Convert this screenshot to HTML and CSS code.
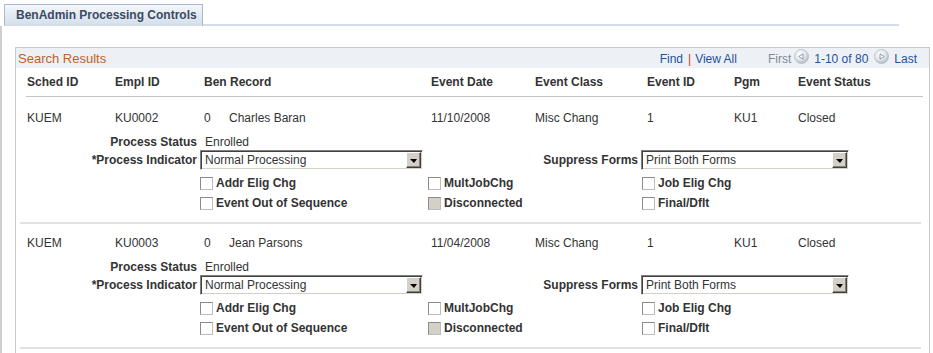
FILE: index.html
```html
<!DOCTYPE html>
<html lang="en">
<head>
<meta charset="UTF-8" />
<title>BenAdmin Processing Controls</title>
<link rel="stylesheet" href="styles.css">
</head>
<body>

<div class="tabs">
  <div class="tab">BenAdmin Processing Controls</div>
  <div class="tab-line"></div>
</div>

<div class="panel">
  <div class="grid">

    <!-- grid title bar -->
    <div class="grid-bar">
      <span class="grid-title">Search Results</span>
      <div class="grid-nav">
        <span class="lnk">Find</span><span class="sep">|</span><span class="lnk">View All</span>
        <span class="first">First</span>
        <svg class="nav-btn prev" viewBox="0 0 15 15">
          <defs>
            <radialGradient id="ball" cx="40%" cy="35%" r="70%">
              <stop offset="0" stop-color="#ffffff"/>
              <stop offset="0.55" stop-color="#e2e6eb"/>
              <stop offset="1" stop-color="#aab3be"/>
            </radialGradient>
          </defs>
          <circle cx="7.5" cy="7.5" r="7" fill="url(#ball)" stroke="#b3bcc6" stroke-width="0.8"/>
          <polygon points="4.8,7.5 9,4.8 9,10.2" fill="#fff" stroke="#76828f" stroke-width="0.8"/>
        </svg>
        <span class="lnk">1-10 of 80</span>
        <svg class="nav-btn next" viewBox="0 0 15 15">
          <circle cx="7.5" cy="7.5" r="7" fill="url(#ball)" stroke="#b3bcc6" stroke-width="0.8"/>
          <polygon points="10.2,7.5 6,4.8 6,10.2" fill="#fff" stroke="#76828f" stroke-width="0.8"/>
        </svg>
        <span class="lnk">Last</span>
      </div>
    </div>

    <!-- column headings -->
    <div class="cols head">
      <span>Sched ID</span>
      <span>Empl ID</span>
      <span>Ben Record</span>
      <span>Event Date</span>
      <span>Event Class</span>
      <span>Event ID</span>
      <span>Pgm</span>
      <span>Event Status</span>
    </div>

    <!-- record 1 -->
    <div class="rec">
      <div class="cols">
        <span>KUEM</span>
        <span>KU0002</span>
        <span class="ben"><span class="ben-no">0</span><span>Charles Baran</span></span>
        <span>11/10/2008</span>
        <span>Misc Chang</span>
        <span>1</span>
        <span>KU1</span>
        <span>Closed</span>
      </div>
      <div class="status">
        <span class="lbl">Process Status</span>
        <span class="val">Enrolled</span>
      </div>
      <div class="ind">
        <span class="lbl">*Process Indicator</span>
        <div class="dd dd-w1"><span>Normal Processing</span><span class="dd-btn"></span></div>
        <span class="lbl lbl-wide">Suppress Forms</span>
        <div class="dd dd-w2"><span>Print Both Forms</span><span class="dd-btn"></span></div>
      </div>
      <div class="cbs cbs-first">
        <span class="cb"><span class="box"></span>Addr Elig Chg</span>
        <span class="cb"><span class="box"></span>MultJobChg</span>
        <span class="cb"><span class="box"></span>Job Elig Chg</span>
      </div>
      <div class="cbs">
        <span class="cb"><span class="box"></span>Event Out of Sequence</span>
        <span class="cb"><span class="box off"></span>Disconnected</span>
        <span class="cb"><span class="box"></span>Final/Dflt</span>
      </div>
    </div>

    <!-- record 2 -->
    <div class="rec">
      <div class="cols">
        <span>KUEM</span>
        <span>KU0003</span>
        <span class="ben"><span class="ben-no">0</span><span>Jean Parsons</span></span>
        <span>11/04/2008</span>
        <span>Misc Chang</span>
        <span>1</span>
        <span>KU1</span>
        <span>Closed</span>
      </div>
      <div class="status">
        <span class="lbl">Process Status</span>
        <span class="val">Enrolled</span>
      </div>
      <div class="ind">
        <span class="lbl">*Process Indicator</span>
        <div class="dd dd-w1"><span>Normal Processing</span><span class="dd-btn"></span></div>
        <span class="lbl lbl-wide">Suppress Forms</span>
        <div class="dd dd-w2"><span>Print Both Forms</span><span class="dd-btn"></span></div>
      </div>
      <div class="cbs cbs-first">
        <span class="cb"><span class="box"></span>Addr Elig Chg</span>
        <span class="cb"><span class="box"></span>MultJobChg</span>
        <span class="cb"><span class="box"></span>Job Elig Chg</span>
      </div>
      <div class="cbs">
        <span class="cb"><span class="box"></span>Event Out of Sequence</span>
        <span class="cb"><span class="box off"></span>Disconnected</span>
        <span class="cb"><span class="box"></span>Final/Dflt</span>
      </div>
    </div>

  </div>
</div>

</body>
</html>
```

FILE: styles.css
```css
body {
  margin: 0;
  font-family: "Liberation Sans", Arial, sans-serif;
  font-size: 12px;
  color: #333;
  background: #fff;
}

/* page tab */
.tabs {
  display: flex;
  align-items: flex-end;
  height: 26px;
}
.tab {
  box-sizing: border-box;
  width: 199px;
  height: 22px;
  margin-left: 4px;
  padding-left: 11px;
  border: 1px solid #a9b8cc;
  border-bottom: none;
  background: linear-gradient(#f4f7fa, #d3ddea);
  color: #3a4a64;
  font-weight: bold;
  line-height: 21px;
  white-space: nowrap;
}
.tab-line {
  width: 696px;
  height: 2px;
  background: #d2deed;
}

.panel {
  border-left: 2px solid #cfcfcf;
  padding: 21px 0 0 13px;
  min-height: 340px;
}

/* grid box */
.grid {
  box-sizing: border-box;
  width: 915px;
  min-height: 320px;
  border: 1px solid #c9c9c9;
}
.grid-bar {
  display: flex;
  justify-content: space-between;
  height: 20px;
  background: #edf1f5;
  line-height: 22px;
}
.grid-title { padding-left: 2px; color: #c0602c; font-size: 13px; }
.grid-nav {
  display: flex;
  align-items: flex-start;
  padding-right: 12px;
}
.lnk { color: #24519c; }
.sep { color: #d0381a; margin: 0 4px 0 5px; }
.first { color: #7d8995; margin-left: 31px; }
.nav-btn { width: 15px; height: 15px; flex: none; }
.prev { margin: 1px 5px 0 3px; }
.next { margin: 1px 5px 0 6px; }

.cols {
  display: grid;
  grid-template-columns: 88px 89px 227px 104px 112px 87px 64px 1fr;
  line-height: 16px;
}
.head {
  margin: 0 6px 2px 10px;
  padding: 6px 0 6px 1px;
  border-bottom: 1px solid #c4c4c4;
  font-weight: bold;
}

/* one result */
.rec {
  margin: 0 8px 0 4px;
  padding: 11px 0 9px;
  border-bottom: 2px solid #e1e1e1;
}
.rec .cols { padding-left: 7px; }
.ben { display: flex; }
.ben-no { width: 25px; }

.lbl {
  flex: none;
  width: 177px;
  text-align: right;
  font-weight: bold;
}
.lbl-wide { width: 215px; }
.status {
  display: flex;
  margin-top: 8px;
  line-height: 16px;
}
.status .val { padding-left: 8px; }
.ind {
  display: flex;
  align-items: center;
  height: 20px;
  line-height: 16px;
}

/* dropdowns */
.dd {
  box-sizing: border-box;
  display: flex;
  align-items: center;
  justify-content: space-between;
  height: 20px;
  margin-left: 3px;
  padding: 0 1px 0 4px;
  border: 1px solid;
  border-color: #808080 #fff #fff #808080;
  box-shadow: inset 1px 1px 0 #404040, inset -1px -1px 0 #d4d0c8;
  background: #fff;
  color: #333;
}
.dd-w1 { width: 223px; }
.dd-w2 { width: 208px; }
.dd-btn {
  box-sizing: border-box;
  display: flex;
  align-items: center;
  justify-content: center;
  width: 15px;
  height: 16px;
  border: 1px solid;
  border-color: #fff #404040 #404040 #fff;
  box-shadow: inset -1px -1px 0 #808080;
  background: #d4d0c8;
}
.dd-btn::after {
  content: "";
  border-left: 4px solid transparent;
  border-right: 3px solid transparent;
  border-top: 4px solid #000;
  margin: 1px 0 0 0;
}

/* checkbox rows */
.cbs {
  display: flex;
  padding-left: 180px;
  line-height: 20px;
}
.cbs-first { margin-top: 3px; }
.cb {
  display: flex;
  align-items: center;
  font-weight: bold;
  white-space: nowrap;
}
.cb:nth-child(1) { width: 228px; }
.cb:nth-child(2) { width: 214px; }
.box {
  box-sizing: border-box;
  width: 13px;
  height: 13px;
  margin-right: 3px;
  border: 1px solid;
  border-color: #8a8a8a #bdbdbd #bdbdbd #8a8a8a;
  background: #fff;
}
.box.off { background: #d4d0c8; }
```
